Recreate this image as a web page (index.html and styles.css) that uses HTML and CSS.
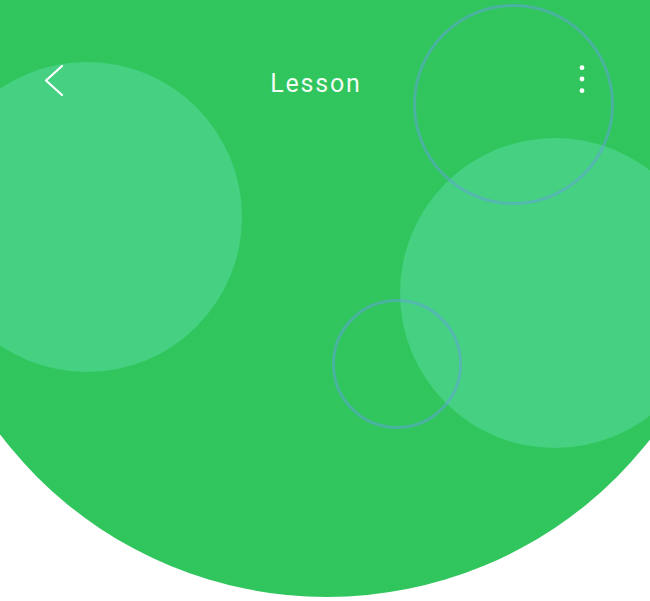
FILE: index.html
```html
<!DOCTYPE html>
<html lang="en">
<head>
<meta charset="utf-8">
<title>Lesson</title>
<link rel="stylesheet" href="styles.css">
</head>
<body>
<div class="screen">
  <div class="hero"></div>
  <div class="bubble bubble-left"></div>
  <div class="bubble bubble-right"></div>
  <div class="ring ring-top"></div>
  <div class="ring ring-mid"></div>
  <header class="topbar">
    <button class="icon-btn back" aria-label="Back">
      <svg width="24" height="32" viewBox="0 0 24 32"><polyline points="22,2 6,16.5 22,31" fill="none" stroke="#fff" stroke-width="2.2" stroke-linecap="round" stroke-linejoin="round"/></svg>
    </button>
    <h1 class="title">Lesson</h1>
    <button class="icon-btn more" aria-label="More">
      <svg width="20" height="30" viewBox="0 0 20 30"><circle cx="10" cy="3.7" r="2.4" fill="#fff"/><circle cx="10" cy="15" r="2.4" fill="#fff"/><circle cx="10" cy="26.7" r="2.4" fill="#fff"/></svg>
    </button>
  </header>
</div>
</body>
</html>
```
FILE: styles.css
```css
html, body {
  margin: 0;
  padding: 0;
  background: #ffffff;
}
.screen {
  position: relative;
  width: 650px;
  height: 601px;
  overflow: hidden;
  background: #ffffff;
  font-family: Roboto, "Noto Sans", sans-serif;
}
.hero {
  position: absolute;
  left: -83px;
  top: -223px;
  width: 820px;
  height: 820px;
  border-radius: 50%;
  background: #30c65d;
}
.bubble {
  position: absolute;
  width: 310px;
  height: 310px;
  border-radius: 50%;
  background: #45d181;
}
.bubble-left { left: -68px; top: 62px; }
.bubble-right { left: 400px; top: 138px; }
.ring {
  position: absolute;
  border-radius: 50%;
  border: 3px solid rgba(100, 160, 225, 0.5);
  box-sizing: border-box;
}
.ring-top { left: 413px; top: 4px; width: 201px; height: 201px; }
.ring-mid { left: 332px; top: 299px; width: 130px; height: 130px; }
.topbar {
  position: relative;
  display: grid;
  grid-template-columns: 1fr auto 1fr;
  align-items: start;
  padding: 64px 58px 0 40px;
}
.icon-btn {
  background: none;
  border: 0;
  padding: 0;
  margin: 0;
  display: flex;
  line-height: 0;
}
.back { justify-self: start; }
.more { justify-self: end; }
.title {
  margin: 0;
  padding-top: 4px;
  font-size: 25px;
  line-height: 32px;
  font-weight: 400;
  letter-spacing: 1.8px;
  color: rgba(255, 255, 255, 0.95);
}
```
